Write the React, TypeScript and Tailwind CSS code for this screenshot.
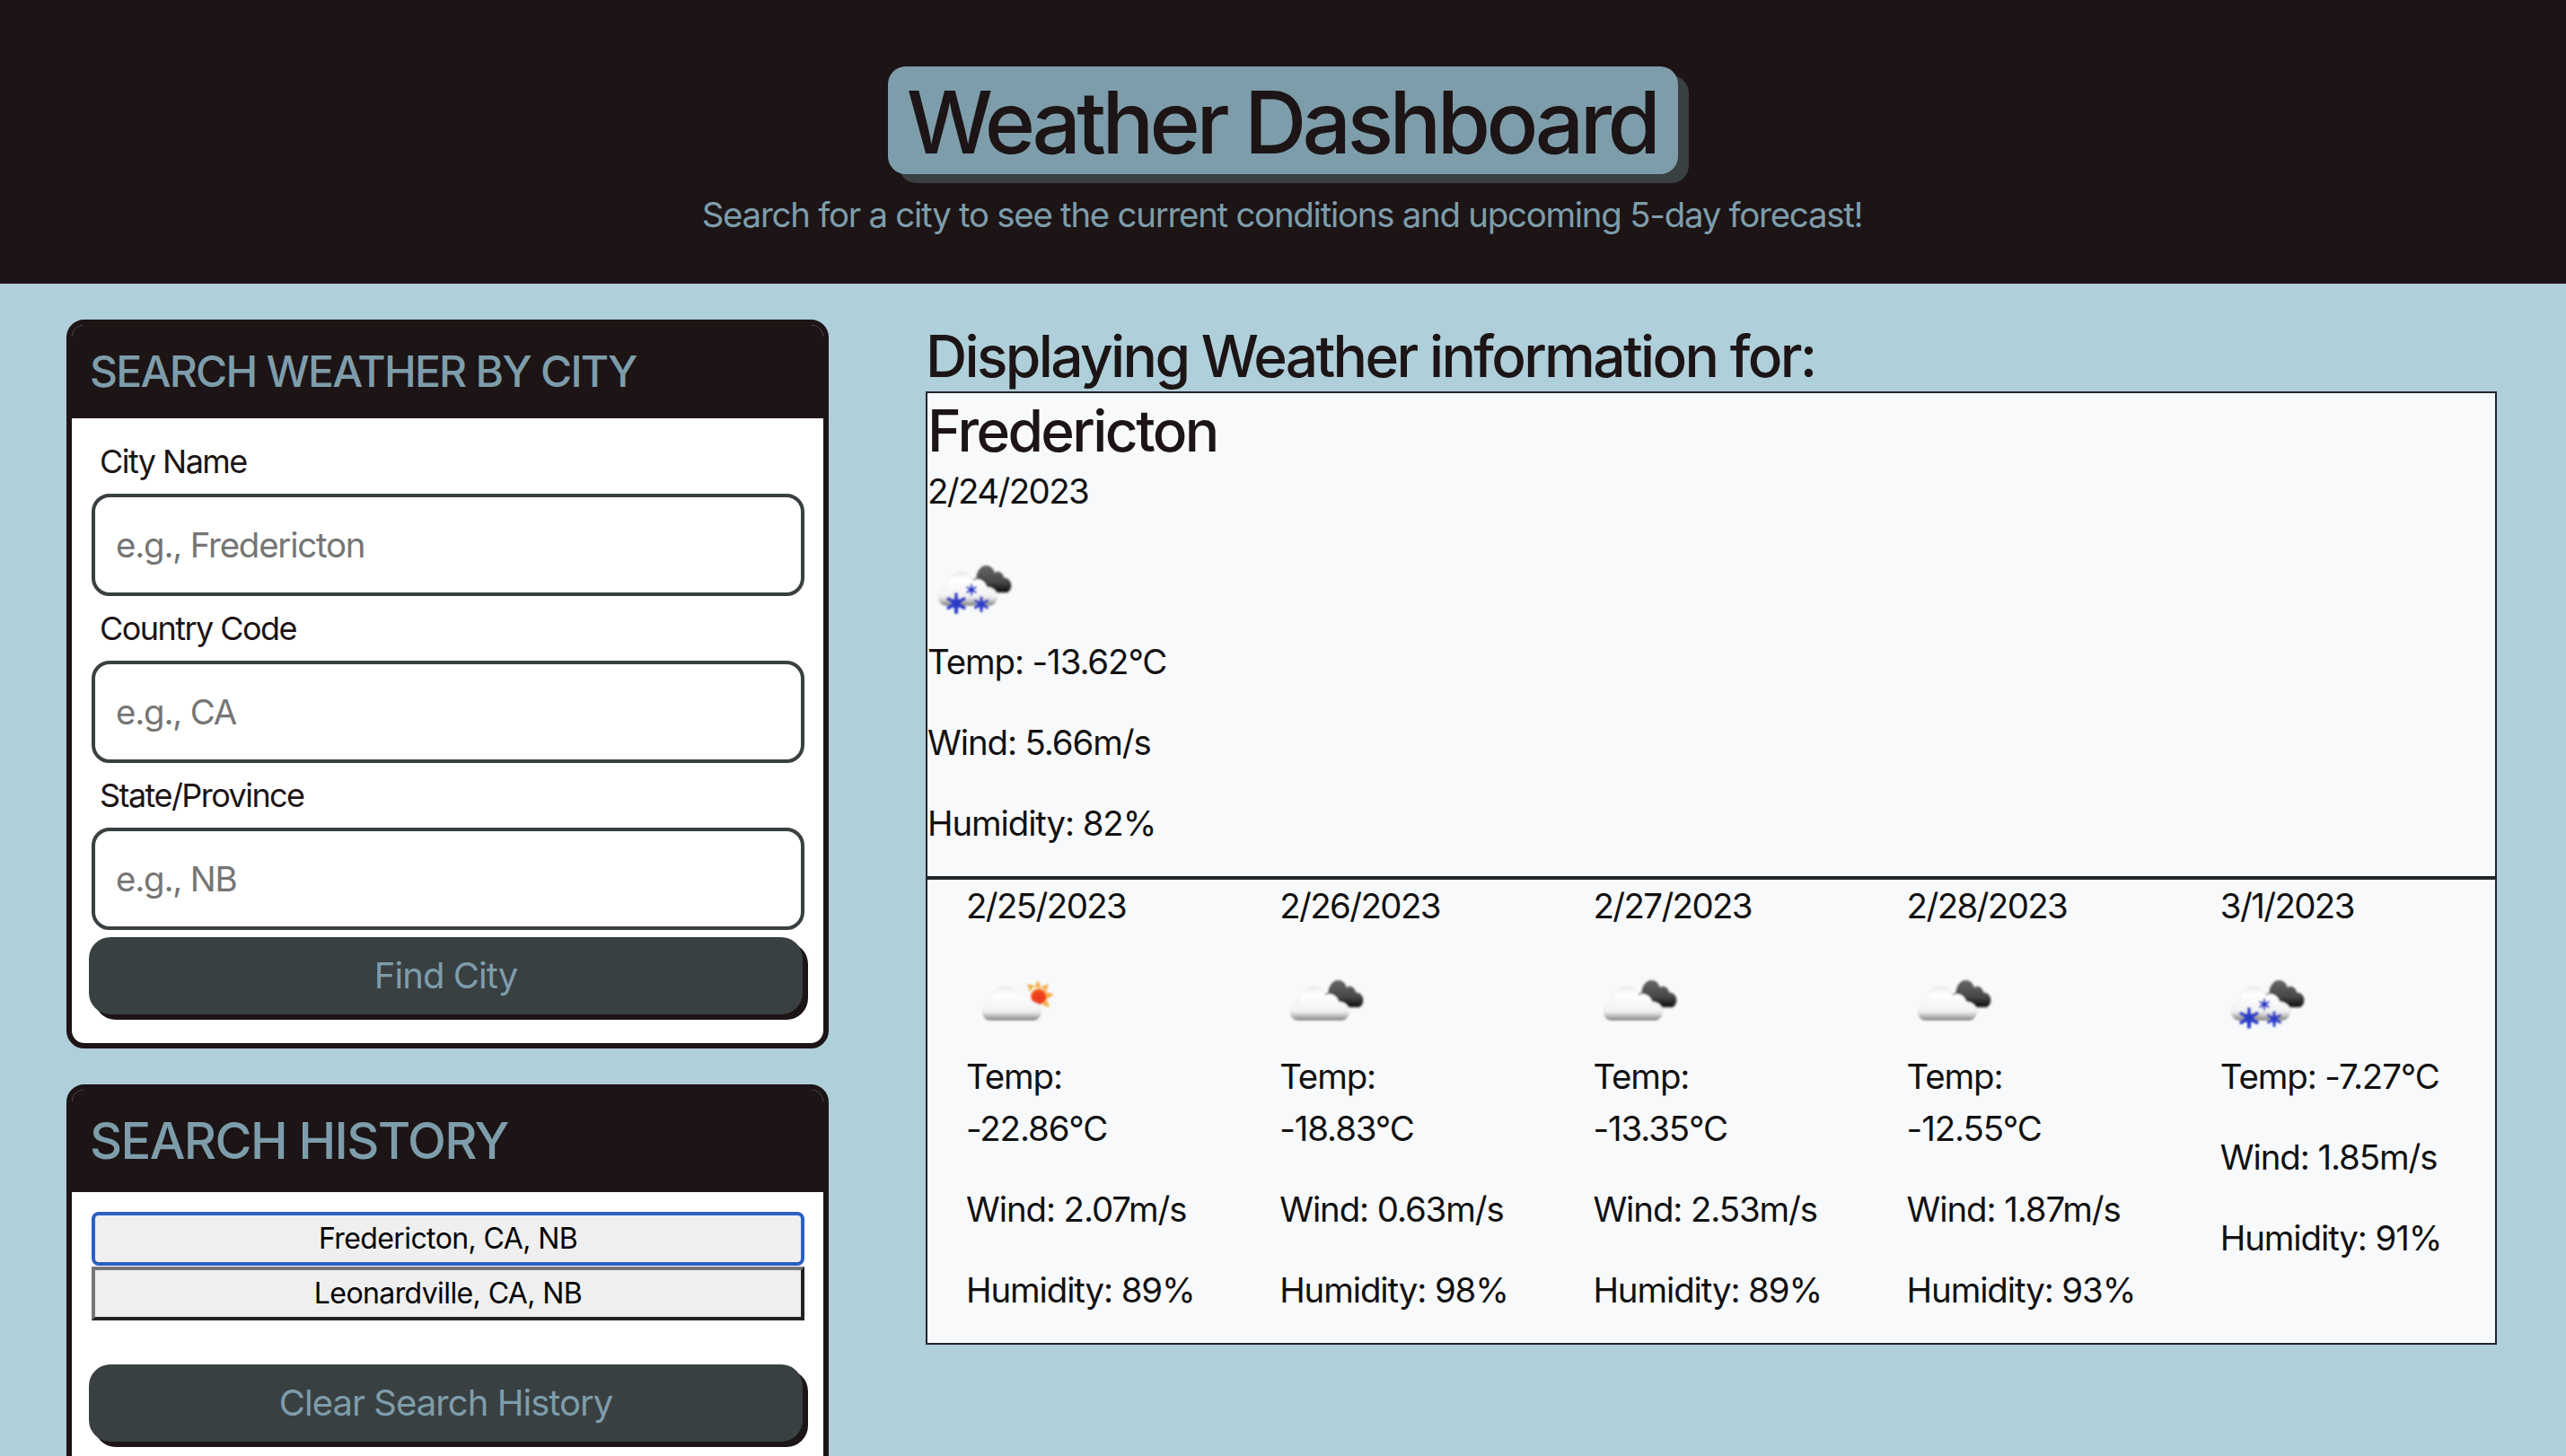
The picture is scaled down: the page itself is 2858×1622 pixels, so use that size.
import type { ReactNode } from 'react'

const cloudPath =
  'M9 38 C3 38 0 33 0 28 C0 22 4 18 9 18 C10 7 17 0 25 0 C32 0 37 4 39 10 C42 8 46 8 49 10 C52 12 53 14 54 17 C61 17 66 22 66 28 C66 33 62 38 57 38 Z'

function Flake({ x, y, r }: { x: number; y: number; r: number }) {
  const arms = [0, 60, 120]
  return (
    <g transform={`translate(${x} ${y})`} stroke="#2b3cc8" strokeWidth={r * 0.42} strokeLinecap="round">
      {arms.map(a => (
        <line key={a} x1={0} y1={-r} x2={0} y2={r} transform={`rotate(${a})`} />
      ))}
      <circle r={r * 0.55} fill="#2b3cc8" stroke="none" />
    </g>
  )
}

function Defs() {
  return (
    <defs>
      <linearGradient id="wc" x1="0" y1="0" x2="0" y2="1">
        <stop offset="0" stopColor="#ececed" />
        <stop offset="0.25" stopColor="#ffffff" />
        <stop offset="0.72" stopColor="#f2f2f2" />
        <stop offset="0.84" stopColor="#c9c9c9" />
        <stop offset="1" stopColor="#7a7a7a" />
      </linearGradient>
      <linearGradient id="dc" x1="0" y1="0" x2="0" y2="1">
        <stop offset="0" stopColor="#666666" />
        <stop offset="0.6" stopColor="#484848" />
        <stop offset="1" stopColor="#0c0c0c" />
      </linearGradient>
      <radialGradient id="sun" cx="0.5" cy="0.6" r="0.6">
        <stop offset="0" stopColor="#e8341c" />
        <stop offset="0.7" stopColor="#f0491e" />
        <stop offset="1" stopColor="#f7a13a" />
      </radialGradient>
      <filter id="soft" x="-20%" y="-20%" width="140%" height="140%">
        <feGaussianBlur stdDeviation="0.8" />
      </filter>
    </defs>
  )
}

// owm style icons, redrawn. box is 100x100, art sits low in it
function WeatherIcon({ kind }: { kind: 'snow' | 'cloud' | 'sun' }) {
  const left = kind === 'sun' ? 18 : 12
  return (
    <svg width="100" height="100" viewBox="0 0 100 100" className="block overflow-visible mb-8" fill="none">
      <Defs />
      <g filter="url(#soft)">
        {kind !== 'sun' && (
          <g transform="translate(48 54) scale(0.69 0.8)">
            <path d={cloudPath} fill="url(#dc)" stroke="#a8a8a8" strokeWidth="1.2" />
          </g>
        )}
        {kind === 'sun' && (
          <g>
            <g fill="#f6b04a">
              <path d="M80 54 L84 62 L76 62 Z" />
              <path d="M68 58 L76 60 L71 67 Z" />
              <path d="M92 58 L89 67 L84 61 Z" />
              <path d="M98 70 L90 75 L90 67 Z" />
              <path d="M93 84 L85 82 L90 75 Z" />
            </g>
            <circle cx="81" cy="72" r="9" fill="url(#sun)" />
          </g>
        )}
        <g transform={`translate(${left} 61)`}>
          <path d={cloudPath} fill="url(#wc)" stroke="#e4e4e6" strokeWidth="0.6" />
        </g>
        {kind === 'snow' && (
          <g>
            <Flake x={32} y={96} r={10} />
            <Flake x={49} y={81} r={5.5} />
            <Flake x={60} y={97} r={7.5} />
          </g>
        )}
      </g>
    </svg>
  )
}

function Panel({ title, big, children }: { title: string; big?: boolean; children: ReactNode }) {
  return (
    <section className="rounded-[20px] border-[6px] border-[#1c1415] bg-white overflow-hidden">
      <h2
        className={
          big
            ? 'bg-[#1c1415] h-[114px] px-[20px] flex items-center text-[#7e9dab] text-[56px] font-[550] tracking-[-1.6px]'
            : 'bg-[#1c1415] h-[104px] px-[20px] flex items-center text-[#7e9dab] text-[48px] font-[550] tracking-[-1.75px]'
        }
      >
        {title}
      </h2>
      {children}
    </section>
  )
}

function Field({ label, placeholder }: { label: string; placeholder: string }) {
  return (
    <div>
      <label className="block pl-[9px] h-[72px] leading-[72px] text-[36px] text-[#1c1415] tracking-[-1.55px]">{label}</label>
      <input
        readOnly
        placeholder={placeholder}
        className="block w-full h-[114px] rounded-[20px] border-4 border-[#394042] bg-white px-[23px] text-[38.4px] tracking-[-1.2px] outline-none placeholder:text-[#757575]"
      />
    </div>
  )
}

function ActionButton({ children }: { children: ReactNode }) {
  return (
    <button className="block w-[795px] h-[86px] -ml-[3px] rounded-[24px] bg-[#394042] text-[#7e9dab] text-[40px] tracking-[-0.95px] shadow-[6px_6px_0_#1c1415]">
      {children}
    </button>
  )
}

const forecast = [
  { date: '2/25/2023', kind: 'sun' as const, temp: '-22.86°C', wind: '2.07', hum: '89' },
  { date: '2/26/2023', kind: 'cloud' as const, temp: '-18.83°C', wind: '0.63', hum: '98' },
  { date: '2/27/2023', kind: 'cloud' as const, temp: '-13.35°C', wind: '2.53', hum: '89' },
  { date: '2/28/2023', kind: 'cloud' as const, temp: '-12.55°C', wind: '1.87', hum: '93' },
  { date: '3/1/2023', kind: 'snow' as const, temp: '-7.27°C', wind: '1.85', hum: '91' },
]

export default function App() {
  return (
    <div className="h-[1622px] overflow-hidden bg-[#afcfda] font-['Inter',sans-serif] text-[#1c1415]">
      <header className="h-[316px] bg-[#1c1415] pt-[74px] flex flex-col items-center">
        <h1 className="h-[120px] w-[880px] pt-[3px] pr-[3px] rounded-[20px] bg-[#7e9dab] shadow-[12px_10px_0_#394042] flex items-center justify-center text-[96px] font-[550] tracking-[-4.6px] text-[#1c1415]">
          Weather Dashboard
        </h1>
        <p className="mt-4 pr-[2px] leading-[58px] text-[38.4px] tracking-[-1.25px] text-[#7e9dab]">
          Search for a city to see the current conditions and upcoming 5-day forecast!
        </p>
      </header>

      <main className="flex pt-10 pl-[74px]">
        <aside className="w-[849px] flex flex-col gap-10">
          <Panel title="SEARCH WEATHER BY CITY">
            <div className="pl-[22px] pr-[21px] pt-3 pb-[32px]">
              <Field label="City Name" placeholder="e.g., Fredericton" />
              <Field label="Country Code" placeholder="e.g., CA" />
              <Field label="State/Province" placeholder="e.g., NB" />
              <div className="mt-2">
                <ActionButton>Find City</ActionButton>
              </div>
            </div>
          </Panel>
          <Panel title="SEARCH HISTORY" big>
            <div className="pl-[22px] pr-[21px] pt-[22px] pb-10">
              <button className="block w-full h-[60px] rounded-[8px] border-4 border-[#2a5fc4] bg-[#efefef] text-[32px] tracking-[-0.6px] text-black">
                Fredericton, CA, NB
              </button>
              <button className="block w-full h-[60px] mt-px border-4 border-t-[#767676] border-l-[#767676] border-b-[#222222] border-r-[#222222] bg-[#efefef] text-[32px] tracking-[-0.6px] text-black">
                Leonardville, CA, NB
              </button>
              <div className="mt-[49px]">
                <ActionButton>Clear Search History</ActionButton>
              </div>
            </div>
          </Panel>
        </aside>

        <div className="w-[1750px] ml-[108px]">
          <h2 className="h-[80px] leading-[81px] text-[64px] font-[550] tracking-[-2.65px]">Displaying Weather information for:</h2>
          <div className="border-2 border-[#212529] bg-[#f8f9fb]">
            <div className="border-b-4 border-[#212529] h-[539px] text-[38.4px] leading-[58px] tracking-[-1.1px] text-[#111111]">
              <h3 className="mt-[3px] h-[77px] text-[64px] leading-[77px] font-[550] tracking-[-2.6px] text-[#1c1415]">Fredericton</h3>
              <p className="tracking-[-1.6px]">2/24/2023</p>
              <WeatherIcon kind="snow" />
              <p className="mb-8">Temp: -13.62°C</p>
              <p className="mb-8">Wind: 5.66m/s</p>
              <p className="mb-8">Humidity: 82%</p>
            </div>
            <div className="grid grid-cols-5 text-[38.4px] leading-[58px] tracking-[-1.1px] text-[#111111]">
              {forecast.map(f => (
                <div key={f.date} className="px-[43px]">
                  <p className="tracking-[-1.6px]">{f.date}</p>
                  <WeatherIcon kind={f.kind} />
                  <p className="mb-8">Temp: {f.temp}</p>
                  <p className="mb-8">Wind: {f.wind}m/s</p>
                  <p className="mb-[30px]">Humidity: {f.hum}%</p>
                </div>
              ))}
            </div>
          </div>
        </div>
      </main>
    </div>
  )
}
